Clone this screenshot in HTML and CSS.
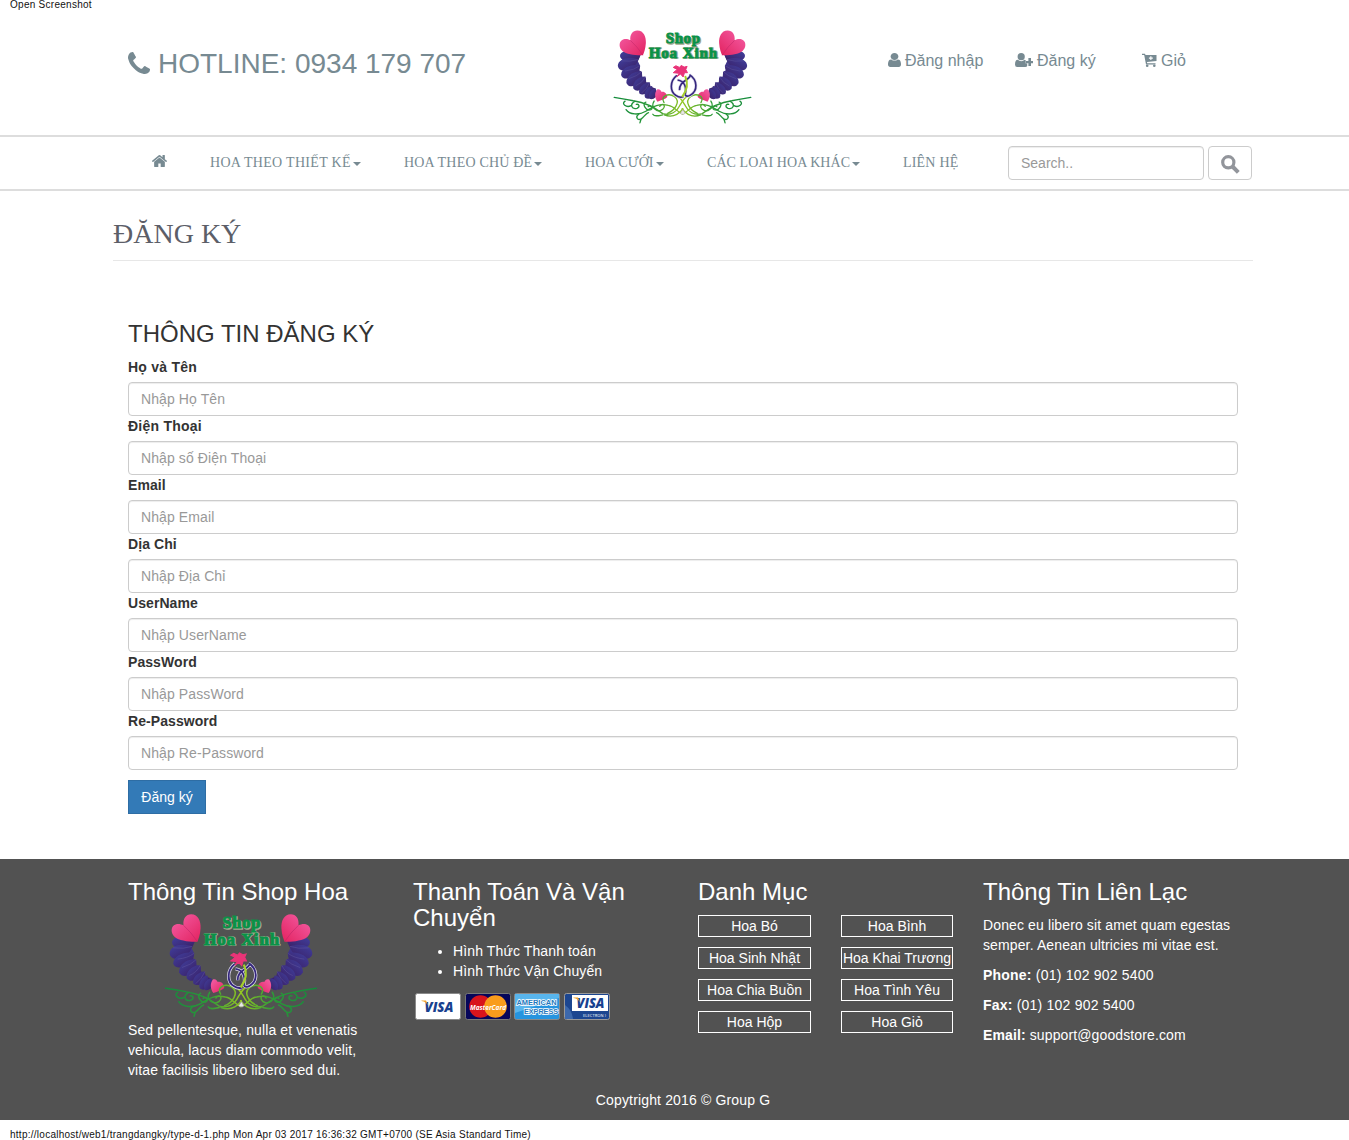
FILE: index.html
```html
<!DOCTYPE html>
<html lang="vi">
<head>
<meta charset="utf-8">
<title>Đăng ký - Shop Hoa Xinh</title>
<link rel="stylesheet" href="styles.css">
</head>
<body>
<svg class="sprites" aria-hidden="true">
  <defs>
    <linearGradient id="pink" x1="0" y1="0" x2="1" y2="1"><stop offset="0" stop-color="#f560a8"/><stop offset="1" stop-color="#e2225f"/></linearGradient>
    <linearGradient id="violet" x1="0" y1="0" x2="1" y2="1"><stop offset="0" stop-color="#40409f"/><stop offset="1" stop-color="#3a1e62"/></linearGradient>
    <linearGradient id="vine" gradientUnits="userSpaceOnUse" x1="40" y1="0" x2="260" y2="0"><stop offset="0" stop-color="#128a3c"/><stop offset=".55" stop-color="#2c9a38"/><stop offset="1" stop-color="#9fcb20"/></linearGradient>
    <g id="wing">
      <g fill="url(#violet)">
        <path d="M66 98L122 106L114 122L122 138L118 150L127 156L128 170L139 174L140 187L151 189L153 200L168 206L172 224L160 232L140 222L122 206L104 190L84 166L70 142Z"/>
        <path d="M123 105C105 88 68 86 61 104C58 120 80 128 116 121Z"/>
        <path d="M116 118C88 108 54 116 54 138C56 152 72 155 86 149C100 144 112 134 116 118Z"/>
        <path d="M121 137C101 130 64 142 64 164C66 179 88 177 98 172C113 163 122 152 121 137Z"/>
        <path d="M126 155C104 150 78 169 80 189C88 206 107 199 116 190C125 179 128 168 126 155Z"/>
        <path d="M138 170C118 168 96 188 101 206C112 220 128 209 134 200C140 189 141 180 138 170Z"/>
        <path d="M151 187C134 186 114 205 119 220C130 230 144 221 149 210Z"/>
        <path d="M158 198C144 198 130 220 137 234C147 241 159 234 163 224Z"/>
        <path d="M168 205C154 208 143 226 151 238C164 241 173 230 173 218Z"/>
      </g>
      <path fill="none" stroke="#6d65a8" stroke-width="1" d="M64 122Q92 126 116 118M76 153Q104 150 121 137M88 176Q114 168 126 155M108 198Q128 190 138 170M126 220Q142 208 151 187"/>
      <path fill="url(#pink)" d="M130 105C108 106 80 102 68 92C57 83 57 66 66 60C74 54 84 56 92 60C90 42 99 30 113 30C133 30 140 50 139 68C138 86 133 98 130 105Z"/>
      <path fill="none" stroke="#bd2467" stroke-width="1.5" d="M92 60Q114 80 130 105"/>
      <path fill="url(#pink)" d="M174 246C166 235 164 220 173 209C181 207 184 212 186 216C195 213 204 222 204 232C198 239 186 241 174 246Z"/>
      <g fill="none" stroke="url(#vine)" stroke-width="4" stroke-linecap="round">
        <path d="M43 233Q76 238 101 243C139 249 166 263 190 282C215 289 233 276 241 259C250 244 258 227 279 225"/>
        <path d="M76 244C63 252 80 265 94 258M79 270C89 286 119 287 139 275C162 261 180 250 207 257C228 260 233 279 251 283"/>
        <path d="M105 245C89 255 96 270 112 266C122 262 119 252 110 254M118 283C105 292 114 304 125 298C133 293 139 281 147 279"/>
        <path d="M139 247C126 251 139 276 154 270C163 265 153 253 146 261M160 284C165 292 176 289 190 286"/>
        <path d="M164 244C151 264 176 281 190 269C203 256 187 248 181 260M194 249C181 228 209 219 225 230C247 246 225 273 205 281"/>
        <path d="M121 310L124 300M195 286C226 298 246 276 251 267"/>
      </g>
    </g>
    <symbol id="logo" viewBox="0 0 500 330">
      <use href="#wing"/>
      <use href="#wing" transform="translate(500 0) scale(-1 1)"/>
      <g class="bloom-edge"><path d="M233 166C210 184 212 216 230 227C238 233 247 233 253 231M271 164C296 180 297 213 274 226C266 231 260 229 258 225M235 180C257 183 263 203 258 225M273 169C264 183 240 185 241 211"/></g>
      <path fill="none" stroke="#35277d" stroke-width="5" d="M233 166C210 184 212 216 230 227C238 233 247 233 253 231M271 164C296 180 297 213 274 226C266 231 260 229 258 225M235 180C257 183 263 203 258 225M273 169C264 183 240 185 241 211"/>
      <path fill="none" stroke="#a5cf2a" stroke-width="6" d="M258 168C267 188 265 210 249 231"/>
      <path fill="#e93478" stroke="#e93478" stroke-width="3" d="M240 160L222 158L234 148L222 142L230 137L241 142L246 136L255 141L264 139L260 148L265 158L256 158L252 171L244 162L233 170Z"/>
      <g class="logo-type" text-anchor="middle">
        <g class="logo-back"><text x="254" y="70" textLength="104">Shop</text><text x="254" y="115" textLength="207">Hoa Xinh</text></g>
        <g class="logo-front"><text x="251" y="68" textLength="104">Shop</text><text x="251" y="113" textLength="207">Hoa Xinh</text></g>
      </g>
      <path fill="#e9e9e9" stroke="#aaa" stroke-width="2" d="M244 281L251 270L258 281L254 284H247Z"/>
    </symbol>
  </defs>
</svg>

<div class="strip">Open Screenshot</div>

<header class="top">
  <div class="hotline"><svg class="ico-phone" viewBox="192 128 1408 1408"><path d="M1600 1240q0 27-10 70.500t-21 68.500q-21 50-122 106-94 51-186 51-27 0-53-3.500t-57-12.500-47-14.500-55.500-20.500-49-18q-98-35-175-83-127-79-264-216t-216-264q-48-77-83-175-3-9-18-49t-20.500-55.500-14.500-47-12.500-57-3.500-53q0-92 51-186 56-101 106-122 25-11 68.500-21t70.500-10q14 0 21 3 18 6 53 76 11 19 30 54t35 63.500 31 53.500q3 4 17.500 25t21.500 35.500 7 28.500q0 20-28.500 50t-62 55-62 53-28.500 46q0 9 5 22.500t8.500 20.500 14 24 11.500 19q76 137 174 235t235 174q2 1 19 11.500t24 14 20.500 8.500 22.500 5q18 0 46-28.500t53-62 55-62 50-28.500q14 0 28.500 7t35.500 21.500 25 17.500q25 15 53.500 31t63.500 35 54 30q70 35 76 53 3 7 3 21z"/></svg><span>HOTLINE: 0934 179 707</span></div>
  <svg class="logo"><use href="#logo"/></svg>
  <nav class="account">
    <a><svg class="ico-user" viewBox="256 128 1280 1536" preserveAspectRatio="none"><path d="M1536 1399q0 109-62.500 187t-150.500 78h-854q-88 0-150.500-78t-62.500-187q0-85 8.500-160.500t31.500-152 58.500-131 94-89 134.500-34.500q131 128 313 128t313-128q76 0 134.500 34.500t94 89 58.500 131 31.500 152 8.500 160.500zm-256-887q0 159-112.500 271.500t-271.500 112.500-271.500-112.500-112.500-271.500 112.500-271.500 271.500-112.500 271.500 112.500 112.500 271.500z"/></svg>Đăng nhập</a>
    <a><svg class="ico-plus" viewBox="0 0 18 14"><circle cx="6.200" cy="3.700" r="3.600"/><path d="M2.700 6.800Q6.200 9.600 9.700 6.800L10.700 7.200V10.400H12.200V13Q11.800 14 10.200 14H2.200Q0 14 0 11.500Q0 6.800 2.700 6.800ZM13.400 5H16V7.900H18V10.300H16V13H13.400V10.300H11V7.900H13.400Z"/></svg>Đăng ký</a>
    <a><svg class="ico-cart" viewBox="0 0 15 14"><path fill-rule="evenodd" d="M0 .8H3L3.500 2H14.500V8L5 9.100L5.200 10.200H13.500V11.500H4L2.200 2.100H0ZM8.300 3.200V4.600H6.900V5.700H8.300V7.100H9.400V5.700H10.800V4.600H9.400V3.200Z"/><circle cx="5.200" cy="12.700" r="1.300"/><circle cx="12.300" cy="12.700" r="1.300"/></svg>Giỏ</a>
  </nav>
</header>

<div class="menu-bar">
  <div class="menu-inner">
    <nav class="menu">
      <a><svg class="ico-home" viewBox="89 248 1614 1288"><path d="M1472 992v480q0 26-19 45t-45 19h-384v-384h-256v384h-384q-26 0-45-19t-19-45v-480q0-1 .5-3t.5-3l575-474 575 474q1 2 1 6zm223-69l-62 74q-8 9-21 11h-3q-13 0-21-7l-692-577-692 577q-12 8-24 7-13-2-21-11l-62-74q-8-10-7-23.500t11-21.500l719-599q32-26 76-26t76 26l244 204v-195q0-14 9-23t23-9h192q14 0 23 9t9 23v408l219 182q10 8 11 21.500t-7 23.500z"/></svg></a>
      <a class="wide">HOA THEO THIẾT KẾ<i class="caret"></i></a>
      <a class="mid">HOA THEO CHỦ ĐỀ<i class="caret"></i></a>
      <a>HOA CƯỚI<i class="caret"></i></a>
      <a>CÁC LOAI HOA KHÁC<i class="caret"></i></a>
      <a class="mid">LIÊN HỆ</a>
    </nav>
    <form class="search">
      <input class="field" type="text" placeholder="Search..">
      <button type="button" class="search-btn" aria-label="Search"><svg viewBox="0 0 19 19"><circle cx="7.300" cy="7.300" r="5.600"/><path d="M11.500 11.500L17.300 17.300"/></svg></button>
    </form>
  </div>
</div>

<main class="page">
  <h1>ĐĂNG KÝ</h1>
  <form class="register">
    <h2>THÔNG TIN ĐĂNG KÝ</h2>
    <label for="f1" class="loose">Họ và Tên</label><input class="field" id="f1" placeholder="Nhập Họ Tên">
    <label for="f2" class="loose">Điện Thoại</label><input class="field" id="f2" placeholder="Nhập số Điện Thoại">
    <label for="f3">Email</label><input class="field" id="f3" placeholder="Nhập Email">
    <label for="f4">Dịa Chỉ</label><input class="field" id="f4" placeholder="Nhập Địa Chỉ">
    <label for="f5">UserName</label><input class="field" id="f5" placeholder="Nhập UserName">
    <label for="f6">PassWord</label><input class="field" id="f6" placeholder="Nhập PassWord">
    <label for="f7">Re-Password</label><input class="field" id="f7" placeholder="Nhập Re-Password">
    <button type="button" class="submit">Đăng ký</button>
  </form>
</main>

<footer class="footer">
  <div class="columns">
    <section>
      <h3>Thông Tin Shop Hoa</h3>
      <svg class="logo-small"><use href="#logo"/></svg>
      <p>Sed pellentesque, nulla et venenatis vehicula, lacus diam commodo velit, vitae facilisis libero libero sed dui.</p>
    </section>
    <section>
      <h3>Thanh Toán Và Vận Chuyển</h3>
      <ul><li>Hình Thức Thanh toán</li><li>Hình Thức Vận Chuyển</li></ul>
      <div class="cards">
        <svg viewBox="0 0 46 27"><rect x=".5" y=".5" width="45" height="26" rx="2" fill="#fff" stroke="#8a8a8a"/><text x="24" y="18.500" class="visa" textLength="29" lengthAdjust="spacingAndGlyphs">VISA</text><path d="M6.500 7.500H11L13.500 13Q11 8.500 6.500 8Z" fill="#f2a42a"/></svg>
        <svg viewBox="0 0 46 27"><rect x=".5" y=".5" width="45" height="26" rx="2" fill="#06065a" stroke="#777"/><circle cx="15.500" cy="13.500" r="11.300" fill="#d8141c"/><circle cx="30.500" cy="13.500" r="11.300" fill="#f99c1c"/><text x="23" y="16.500" class="mc" textLength="36" lengthAdjust="spacingAndGlyphs">MasterCard</text></svg>
        <svg viewBox="0 0 46 27"><rect x=".5" y=".5" width="45" height="26" rx="2" fill="#2694df" stroke="#8a8a8a"/><path d="M1 1H45V5L1 20Z" fill="#58b5ed"/><text x="22.500" y="12" class="amex" textLength="40" lengthAdjust="spacingAndGlyphs">AMERICAN</text><text x="27" y="21" class="amex" textLength="34" lengthAdjust="spacingAndGlyphs">EXPRESS</text></svg>
        <svg viewBox="0 0 46 27"><rect x=".5" y=".5" width="45" height="26" rx="2" fill="#1c4690" stroke="#999"/><path d="M8 2H44V18H8Z" fill="#fff"/><path d="M1 12Q8 17 9 26H1Z" fill="#3c68ac"/><text x="26.500" y="15" class="visa" textLength="28" lengthAdjust="spacingAndGlyphs">VISA</text><path d="M9.500 4.500H14L16.500 10Q14 5.500 9.500 5Z" fill="#f2a42a"/><text x="30.500" y="23.500" class="electron" textLength="23">ELECTRON )</text></svg>
      </div>
    </section>
    <section>
      <h3>Danh Mục</h3>
      <div class="tags"><a>Hoa Bó</a><a>Hoa Bình</a><a>Hoa Sinh Nhật</a><a>Hoa Khai Trương</a><a>Hoa Chia Buồn</a><a>Hoa Tình Yêu</a><a>Hoa Hộp</a><a>Hoa Giỏ</a></div>
    </section>
    <section class="contact">
      <h3>Thông Tin Liên Lạc</h3>
      <p>Donec eu libero sit amet quam egestas semper. Aenean ultricies mi vitae est.</p>
      <p class="tel"><b>Phone:</b> (01) 102 902 5400</p>
      <p class="tel"><b>Fax:</b> (01) 102 902 5400</p>
      <p><b>Email:</b> support@goodstore.com</p>
    </section>
  </div>
  <div class="copyright">Copytright 2016 © Group G</div>
</footer>
<div class="strip strip-bottom">http://localhost/web1/trangdangky/type-d-1.php Mon Apr 03 2017 16:36:32 GMT+0700 (SE Asia Standard Time)</div>
</body>
</html>
```
FILE: styles.css
```css
* { box-sizing: border-box; }
body { margin: 0; background: #fff; color: #333; font: 14px/20px "Liberation Sans", Arial, sans-serif; overflow: hidden; }
h1, h2, h3, p, ul { margin: 0; font-weight: 400; }
.sprites { display: block; width: 0; height: 0; }
.strip { height: 10px; padding-left: 10px; font-size: 10px; line-height: 10px; letter-spacing: .27px; color: #111; white-space: nowrap; }
.strip-bottom { height: 20px; padding-top: 10px; letter-spacing: .26px; }

.top { display: grid; grid-template-columns: 472px 274px 1fr; width: 1140px; height: 125px; margin-left: 113px; padding-left: 15px; color: #778a92; }
.top svg { fill: currentColor; }
.hotline { display: flex; align-items: flex-start; gap: 8px; padding-top: 34px; font-size: 28px; line-height: 40px; white-space: nowrap; }
.ico-phone { width: 22px; height: 22px; margin-top: 8px; }
.top .logo { width: 165px; height: 110px; margin-top: 10px; }
.account { display: grid; grid-template-columns: 127px 127px 1fr; padding: 41px 0 0 14px; font-size: 16px; line-height: 20px; white-space: nowrap; }
.account a { display: flex; align-items: flex-start; gap: 4px; }
.account svg { margin-top: 2px; height: 14px; }
.ico-user { width: 13px; }
.ico-plus { width: 18px; }
.ico-cart { width: 15px; }
.logo-type { font: bold 45px "Liberation Serif", serif; }
.logo-back { fill: #a3a88f; stroke: #a3a88f; stroke-width: 4px; }
.logo-front { fill: #099247; stroke: #099247; stroke-width: 2.5px; }
.bloom-edge { fill: none; stroke: #dcd9ea; stroke-width: 9px; }

.menu-bar { height: 56px; border-top: 2px solid #ddd; border-bottom: 2px solid #ddd; }
.menu-inner { display: flex; width: 1140px; margin-left: 113px; padding-left: 39px; }
.menu { display: grid; grid-template-columns: 58px 194px 181px 122px 196px 105px; padding-top: 16px; font: 14px/20px "Liberation Serif", "Times New Roman", serif; letter-spacing: .07px; color: #778a92; white-space: nowrap; }
.menu .wide { letter-spacing: .3px; }
.menu .mid { letter-spacing: .2px; }
.ico-home { display: block; width: 15px; height: 12px; margin-top: 2px; fill: currentColor; }
.caret { display: inline-block; margin-left: 2px; vertical-align: middle; border-top: 4px solid; border-left: 4px solid transparent; border-right: 4px solid transparent; }
.search { display: flex; gap: 4px; padding-top: 9px; }
.search .field { width: 196px; }
.search-btn { width: 44px; height: 34px; padding: 2px 0 0; border: 1px solid #ccc; border-radius: 4px; background: #fff; }
.search-btn svg { display: block; width: 19px; height: 19px; margin: 0 auto; fill: none; stroke: #92959b; stroke-width: 3.2px; }
.search-btn path { stroke-width: 4px; }

.field { display: block; width: 100%; height: 34px; padding: 6px 12px; border: 1px solid #ccc; border-radius: 4px; background: #fff; box-shadow: inset 0 1px 1px rgba(0, 0, 0, .075); font: 14px/20px "Liberation Sans", Arial, sans-serif; color: #555; }
.field::placeholder { color: #999; opacity: 1; }
.register .field { letter-spacing: .1px; }

.page { width: 1140px; height: 668px; margin-left: 113px; }
.page h1 { height: 70px; padding-top: 26px; border-bottom: 1px solid #e7e7e7; font: 28px/33px "Liberation Serif", "Times New Roman", serif; color: #5c5e68; }
.register { padding: 60px 15px 0; }
.register h2 { height: 36px; font-size: 24px; line-height: 26px; }
.register label { display: block; height: 25px; font-weight: 700; letter-spacing: .07px; }
.register .loose { letter-spacing: .24px; }
.submit { display: block; height: 34px; width: 78px; margin-top: 10px; padding: 0; border: 1px solid #2e6da4; background: #337ab7; color: #fff; font: 14px/20px "Liberation Sans", Arial, sans-serif; }

.footer { height: 261px; background: #525252; color: #fff; }
.columns { display: grid; grid-template-columns: repeat(4, 255px); gap: 30px; height: 231px; margin-left: 128px; padding-top: 20px; }
.columns h3 { margin-bottom: 10px; font-size: 24px; line-height: 26px; }
.columns p, .columns li { letter-spacing: .12px; }
.columns .tel { letter-spacing: .21px; }
.logo-small { display: block; width: 182px; height: 121px; margin: -12px 0 -4px 22px; }
.columns ul { padding-left: 40px; margin-bottom: 12px; }
.cards { display: flex; gap: 3.6px; padding-left: 2px; }
.cards svg { width: 46px; height: 27px; }
.cards text { text-anchor: middle; font-family: "Open Sans", "Liberation Sans", sans-serif; font-style: italic; font-weight: 700; }
.cards .visa { font-weight: 800; font-size: 14.5px; fill: #18418f; }
.cards .mc { font-size: 7px; fill: #fff; }
.cards .amex { font-family: "Liberation Sans", sans-serif; font-style: normal; font-size: 8px; fill: #2478bd; stroke: #fff; stroke-width: 1.6px; paint-order: stroke; }
.cards .electron { font-size: 4px; font-style: normal; font-weight: 400; fill: #fff; }
.tags { display: grid; grid-template-columns: 113px 112px; column-gap: 30px; row-gap: 10px; }
.tags a { height: 22px; border: 1px solid #fff; line-height: 20px; text-align: center; white-space: nowrap; }
.contact p { margin-bottom: 10px; }
.copyright { padding-left: 17px; text-align: center; letter-spacing: .15px; }
```
